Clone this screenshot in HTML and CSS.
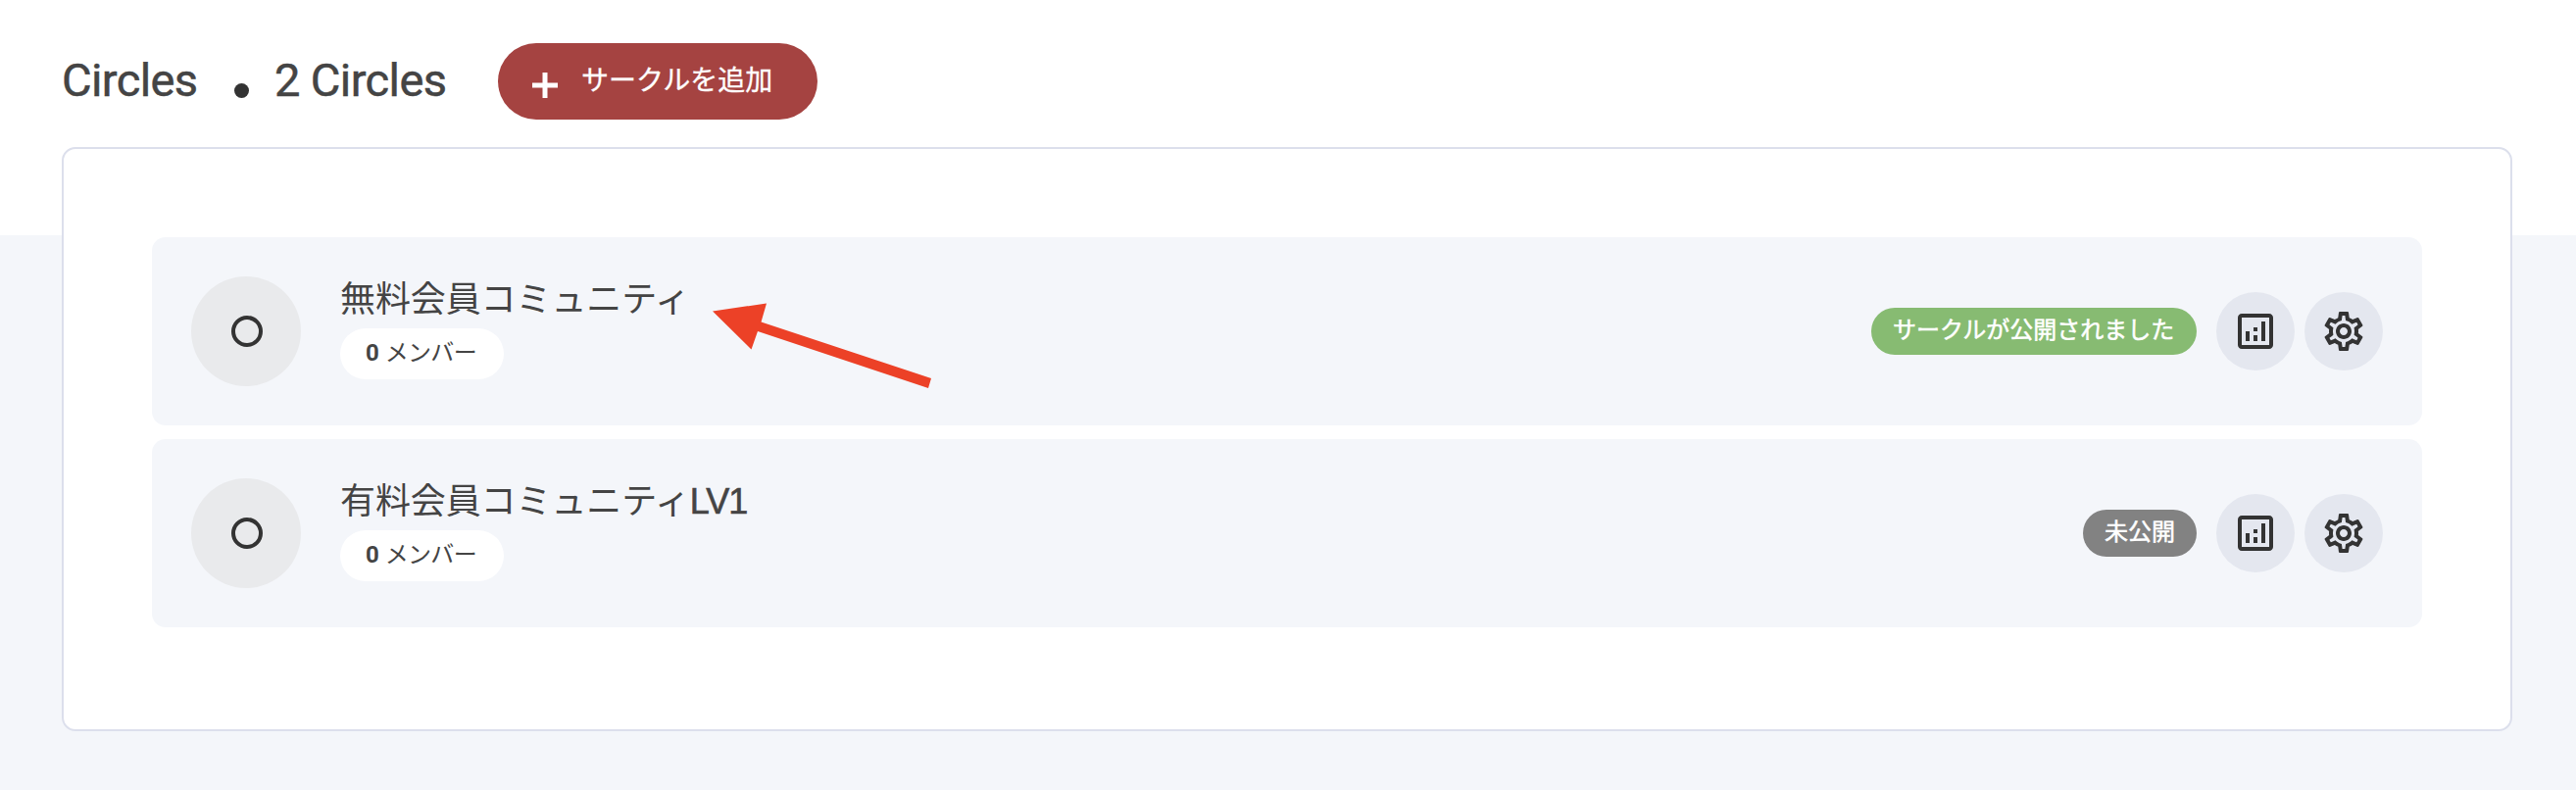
FILE: index.html
```html
<!DOCTYPE html>
<html lang="ja">
<head>
<meta charset="utf-8">
<title>Circles</title>
<link rel="stylesheet" href="styles.css">
</head>
<body>
<svg class="sprite" width="0" height="0" aria-hidden="true">
  <symbol id="chart" viewBox="0 0 24 24">
    <path d="M19 3H5c-1.1 0-2 .9-2 2v14c0 1.1.9 2 2 2h14c1.1 0 2-.9 2-2V5c0-1.1-.9-2-2-2zm0 16H5V5h14v14zM7 12h2v5H7zM15 7h2v10h-2zM11 14h2v3h-2zM11 10h2v2h-2z"/>
  </symbol>
  <symbol id="gear" viewBox="0 0 24 24">
    <path d="M19.43 12.98c.04-.32.07-.64.07-.98 0-.34-.03-.66-.07-.98l2.11-1.65c.19-.15.24-.42.12-.64l-2-3.46c-.09-.16-.26-.25-.44-.25-.06 0-.12.01-.17.03l-2.49 1c-.52-.4-1.08-.73-1.69-.98l-.38-2.65C14.46 2.18 14.25 2 14 2h-4c-.25 0-.46.18-.49.42l-.38 2.65c-.61.25-1.17.59-1.69.98l-2.49-1c-.06-.02-.12-.03-.18-.03-.17 0-.34.09-.43.25l-2 3.46c-.13.22-.07.49.12.64l2.11 1.65c-.04.32-.07.65-.07.98 0 .33.03.66.07.98l-2.11 1.65c-.19.15-.24.42-.12.64l2 3.46c.09.16.26.25.44.25.06 0 .12-.01.17-.03l2.49-1c.52.4 1.08.73 1.69.98l.38 2.65c.03.24.24.42.49.42h4c.25 0 .46-.18.49-.42l.38-2.65c.61-.25 1.17-.59 1.69-.98l2.49 1c.06.02.12.03.18.03.17 0 .34-.09.43-.25l2-3.46c.12-.22.07-.49-.12-.64l-2.11-1.65zm-1.98-1.71c.04.31.05.52.05.73 0 .21-.02.43-.05.73l-.14 1.13.89.7 1.08.84-.7 1.21-1.27-.51-1.04-.42-.9.68c-.43.32-.84.56-1.25.73l-1.06.43-.16 1.13-.2 1.35h-1.4l-.19-1.35-.16-1.13-1.06-.43c-.43-.18-.83-.41-1.23-.71l-.91-.7-1.06.43-1.27.51-.7-1.21 1.08-.84.89-.7-.14-1.13c-.03-.31-.05-.54-.05-.74s.02-.43.05-.73l.14-1.13-.89-.7-1.08-.84.7-1.21 1.27.51 1.04.42.9-.68c.43-.32.84-.56 1.25-.73l1.06-.43.16-1.13.2-1.35h1.39l.19 1.35.16 1.13 1.06.43c.43.18.83.41 1.23.71l.91.7 1.06-.43 1.27-.51.7 1.21-1.07.85-.89.7.14 1.13zM12 8c-2.21 0-4 1.79-4 4s1.79 4 4 4 4-1.79 4-4-1.79-4-4-4zm0 6c-1.1 0-2-.9-2-2s.9-2 2-2 2 .9 2 2-.9 2-2 2z"/>
  </symbol>
</svg>
<main class="page">
  <header class="header">
    <h1 class="heading">Circles</h1>
    <span class="dot"></span>
    <span class="heading count">2 Circles</span>
    <button class="add">
      <svg class="plus" viewBox="0 0 26 26"><path d="M0 13h26M13 0v26"/></svg>
      <span class="add-label">サークルを追加</span>
    </button>
  </header>
  <section class="card">
    <article class="row">
      <div class="avatar"><span class="ring"></span></div>
      <div class="info">
        <h2 class="title">無料会員コミュニティ</h2>
        <span class="members"><b>0</b> <span class="unit">メンバー</span></span>
      </div>
      <span class="badge published">サークルが公開されました</span>
      <button class="action"><svg class="icon"><use href="#chart"/></svg></button>
      <button class="action"><svg class="icon"><use href="#gear"/></svg></button>
    </article>
    <article class="row">
      <div class="avatar"><span class="ring"></span></div>
      <div class="info">
        <h2 class="title">有料会員コミュニティ<span class="latin">LV1</span></h2>
        <span class="members"><b>0</b> <span class="unit">メンバー</span></span>
      </div>
      <span class="badge">未公開</span>
      <button class="action"><svg class="icon"><use href="#chart"/></svg></button>
      <button class="action"><svg class="icon"><use href="#gear"/></svg></button>
    </article>
  </section>
</main>
<svg class="arrow" viewBox="0 0 224 88"><path d="M0 8.5L55 0.5 49.5 19.5 223 77 220 87 46 29 39.500 47.500Z"/></svg>
</body>
</html>
```
FILE: styles.css
```css
* { box-sizing: border-box; }
body {
  margin: 0;
  min-height: 806px;
  background: linear-gradient(#fff 240px, #f4f6fa 240px);
  color: #444;
  font-family: Roboto, "Noto Sans CJK JP", sans-serif;
  overflow: hidden;
}
.sprite { position: absolute; }
.page { padding: 44px 65px 0 63px; }
.header { display: flex; align-items: center; height: 78px; }
.heading {
  margin: 0;
  padding-bottom: 2px;
  font-size: 47px;
  font-weight: 400;
  letter-spacing: -0.6px;
  line-height: 76px;
  white-space: nowrap;
  -webkit-text-stroke: 0.5px #444;
}
h1.heading { width: 176px; }
.count { width: 227px; margin-right: 1px; }
.dot {
  width: 15px;
  height: 15px;
  margin: 19px 26px 0 0;
  border-radius: 50%;
  background: #333;
}
button { padding: 0; border: 0; font-family: inherit; }
.add {
  display: flex;
  align-items: center;
  gap: 24px;
  width: 326px;
  height: 78px;
  padding-left: 35px;
  border-radius: 39px;
  background: #a54341;
  color: #fff;
}
.plus {
  width: 26px;
  height: 26px;
  margin-top: 8px;
  fill: none;
  stroke: #fff;
  stroke-width: 5;
}
.add-label {
  padding-bottom: 1px;
  font-size: 28px;
  line-height: 40px;
  white-space: nowrap;
  -webkit-text-stroke: 0.3px #fff;
}
.card {
  display: flex;
  flex-direction: column;
  gap: 14px;
  height: 596px;
  margin-top: 28px;
  padding: 90px;
  border: 2px solid #dcdfec;
  border-radius: 14px;
  background: #fff;
}
.row {
  display: flex;
  align-items: center;
  height: 192px;
  padding: 0 40px;
  border-radius: 14px;
  background: #f4f6fa;
}
.avatar {
  display: grid;
  place-items: center;
  width: 112px;
  height: 112px;
  padding-left: 2px;
  border-radius: 50%;
  background: #e9eaec;
}
.ring {
  width: 32px;
  height: 32px;
  border: 4px solid #333;
  border-radius: 50%;
}
.info {
  display: flex;
  flex: 1;
  flex-direction: column;
  align-items: flex-start;
  height: 112px;
  margin-left: 40px;
}
.title {
  height: 53px;
  margin: 0;
  padding-top: 2px;
  font-size: 36px;
  font-weight: 400;
  letter-spacing: -0.1px;
  line-height: 44px;
}
.latin {
  font-family: "Liberation Sans", sans-serif;
  letter-spacing: -1px;
  -webkit-text-stroke: 0.6px #444;
}
.members {
  width: 167px;
  height: 52px;
  padding-left: 26px;
  border-radius: 26px;
  background: #fff;
  font-size: 24px;
  line-height: 50px;
  white-space: nowrap;
}
.members b { font-weight: 700; }
.unit { letter-spacing: -0.7px; }
.badge {
  height: 48px;
  margin-right: 20px;
  padding: 0 22px;
  border-radius: 24px;
  background: #828282;
  color: #fff;
  font-size: 24px;
  font-weight: 400;
  line-height: 46px;
  white-space: nowrap;
  -webkit-text-stroke: 0.5px #fff;
}
.published { width: 332px; background: #87bb72; }
.action {
  display: grid;
  place-items: center;
  width: 80px;
  height: 80px;
  border-radius: 50%;
  background: #e4e7ef;
}
.action + .action { margin-left: 10px; }
.icon { width: 48px; height: 48px; fill: #333; }
.arrow {
  position: absolute;
  left: 727px;
  top: 308.5px;
  width: 224px;
  height: 88px;
  fill: #ec4127;
}
```
